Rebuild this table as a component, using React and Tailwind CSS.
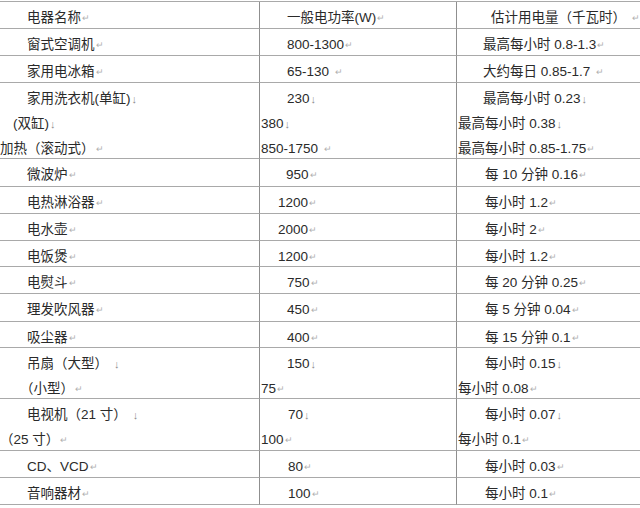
const rows = [
  [
    [{ t: "电器名称", x: 27 }],
    [{ t: "一般电功率(W)", x: 27 }],
    [{ t: "估计用电量（千瓦时）", x: 34, gap: true }],
  ],
  [[{ t: "窗式空调机", x: 27 }], [{ t: "800-1300", x: 27 }], [{ t: "最高每小时 0.8-1.3", x: 26 }]],
  [[{ t: "家用电冰箱", x: 27 }], [{ t: "65-130", x: 27, gap: true }], [{ t: "大约每日 0.85-1.7", x: 26, gap: true }]],
  [
    [
      { t: "家用洗衣机(单缸)", x: 27, m: "↓" },
      { t: "(双缸)", x: 13, m: "↓" },
      { t: "加热（滚动式）", x: 0 },
    ],
    [
      { t: "230", x: 27, m: "↓" },
      { t: "380", x: 1, m: "↓" },
      { t: "850-1750", x: 1, gap: true },
    ],
    [
      { t: "最高每小时 0.23", x: 26, m: "↓" },
      { t: "最高每小时 0.38", x: 1, m: "↓" },
      { t: "最高每小时 0.85-1.75", x: 1 },
    ],
  ],
  [[{ t: "微波炉", x: 27 }], [{ t: "950", x: 26 }], [{ t: "每 10 分钟 0.16", x: 28 }]],
  [[{ t: "电热淋浴器", x: 27 }], [{ t: "1200", x: 18 }], [{ t: "每小时 1.2", x: 28 }]],
  [[{ t: "电水壶", x: 27 }], [{ t: "2000", x: 18 }], [{ t: "每小时 2", x: 28 }]],
  [[{ t: "电饭煲", x: 27 }], [{ t: "1200", x: 18 }], [{ t: "每小时 1.2", x: 28 }]],
  [[{ t: "电熨斗", x: 27 }], [{ t: "750", x: 27 }], [{ t: "每 20 分钟 0.25", x: 28 }]],
  [[{ t: "理发吹风器", x: 27 }], [{ t: "450", x: 27 }], [{ t: "每 5 分钟 0.04", x: 28 }]],
  [[{ t: "吸尘器", x: 27 }], [{ t: "400", x: 27 }], [{ t: "每 15 分钟 0.1", x: 28 }]],
  [
    [
      { t: "吊扇（大型）", x: 27, m: "↓", gap: true },
      { t: "（小型）", x: 20 },
    ],
    [
      { t: "150", x: 27, m: "↓" },
      { t: "75", x: 1 },
    ],
    [
      { t: "每小时 0.15", x: 28, m: "↓" },
      { t: "每小时 0.08", x: 1 },
    ],
  ],
  [
    [
      { t: "电视机（21 寸）", x: 27, m: "↓", gap: true },
      { t: "（25 寸）", x: 0 },
    ],
    [
      { t: "70", x: 28, m: "↓" },
      { t: "100", x: 1 },
    ],
    [
      { t: "每小时 0.07", x: 28, m: "↓" },
      { t: "每小时 0.1", x: 1 },
    ],
  ],
  [[{ t: "CD、VCD", x: 27 }], [{ t: "80", x: 28 }], [{ t: "每小时 0.03", x: 28 }]],
  [[{ t: "音响器材", x: 27 }], [{ t: "100", x: 28 }], [{ t: "每小时 0.1", x: 28 }]],
];

const heights = [27, 27, 27, 76, 28, 27, 27, 26, 27, 28, 26, 51, 52, 27, 27];

function Line({ line }) {
  return (
    <div className="flex h-[25px] items-center whitespace-nowrap" style={{ paddingLeft: line.x }}>
      <span>{line.t}</span>
      {line.gap && <span className="w-[5px] shrink-0" />}
      {line.m === "↓" ? (
        <span className="ml-[1px] text-[11px] text-[#8c8c8c]">↓</span>
      ) : (
        <span className="ml-[1px] text-[9px] text-[#b0b0b0]">↵</span>
      )}
    </div>
  );
}

export default function App() {
  return (
    <div
      className="h-[508px] w-[640px] overflow-hidden bg-white pt-[1px] text-[13.5px] text-[#2a2a2a]"
      style={{ fontFamily: '"Liberation Sans", "Noto Sans CJK SC", sans-serif' }}
    >
      <div className="grid grid-cols-[260px_197px_1fr] border-t border-[#a9a9a9]">
        {rows.map((row, i) =>
          row.map((cell, j) => (
            <div
              key={`${i}-${j}`}
              className={`border-b border-[#a9a9a9] pt-[4px] ${j < 2 ? "border-r border-r-[#8f8f8f]" : ""}`}
              style={{ height: heights[i] }}
            >
              {cell.map((line, k) => (
                <Line key={k} line={line} />
              ))}
            </div>
          ))
        )}
      </div>
    </div>
  );
}
